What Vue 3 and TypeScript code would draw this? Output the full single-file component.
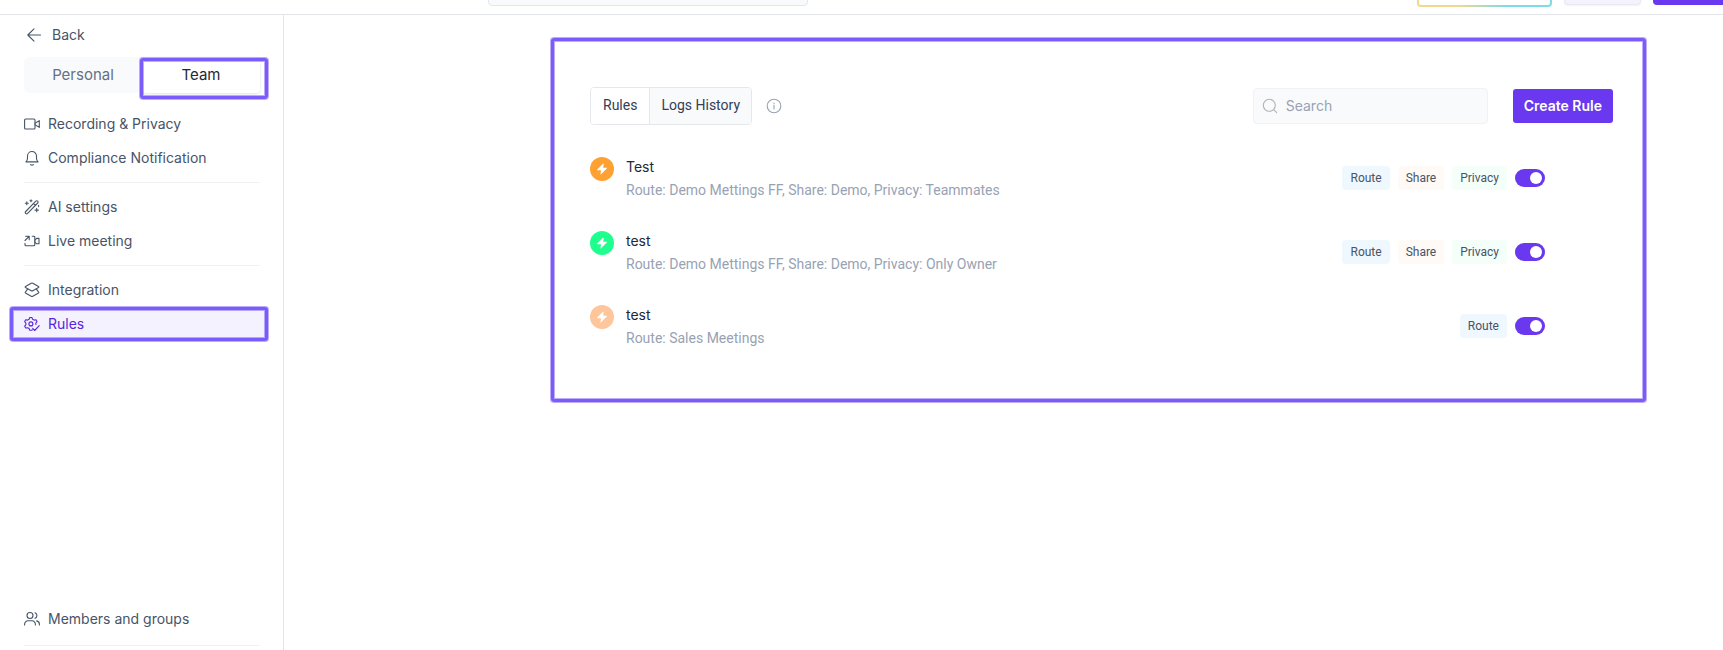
<script setup lang="ts">
import { ref } from 'vue'

interface NavItem {
  label: string
  icon: string
  active?: boolean
}

interface Rule {
  name: string
  detail: string
  tone: string
  tags: string[]
  enabled: boolean
}

const groups: NavItem[][] = [
  [
    { label: 'Recording & Privacy', icon: 'video' },
    { label: 'Compliance Notification', icon: 'bell' },
  ],
  [
    { label: 'AI settings', icon: 'wand' },
    { label: 'Live meeting', icon: 'live' },
  ],
  [
    { label: 'Integration', icon: 'layers' },
    { label: 'Rules', icon: 'gear', active: true },
  ],
]

const rules = ref<Rule[]>([
  {
    name: 'Test',
    detail: 'Route: Demo Mettings FF, Share: Demo, Privacy: Teammates',
    tone: 'orange',
    tags: ['Route', 'Share', 'Privacy'],
    enabled: true,
  },
  {
    name: 'test',
    detail: 'Route: Demo Mettings FF, Share: Demo, Privacy: Only Owner',
    tone: 'green',
    tags: ['Route', 'Share', 'Privacy'],
    enabled: true,
  },
  {
    name: 'test',
    detail: 'Route: Sales Meetings',
    tone: 'peach',
    tags: ['Route'],
    enabled: true,
  },
])

const query = ref('')
</script>

<template>
  <div class="page">
    <header class="topbar">
      <div class="top-search"></div>
      <div class="top-actions">
        <div class="top-upgrade"></div>
        <div class="top-secondary"></div>
        <div class="top-primary"></div>
      </div>
    </header>

    <div class="body">
      <aside class="sidebar">
        <a href="#" class="back">
          <svg width="16" height="16" viewBox="0 0 16 16" class="line"><path d="M14.5 8H1.8M8 1.8 1.8 8 8 14.2" /></svg>
          <span>Back</span>
        </a>

        <div class="scope">
          <button type="button" class="scope-tab">Personal</button>
          <button type="button" class="scope-tab selected">Team</button>
          <div class="scope-marker"></div>
        </div>

        <nav class="nav">
          <ul v-for="(group, g) in groups" :key="g" class="group">
            <li v-for="item in group" :key="item.label">
              <a href="#" class="nav-link" :class="{ active: item.active }">
                <svg width="16" height="16" viewBox="0 0 16 16" class="line">
                  <template v-if="item.icon === 'video'">
                    <rect x="0.6" y="3" width="10.4" height="10" rx="1" />
                    <path d="M11 7.2 15.3 4.6V11.4L11 8.8" />
                  </template>
                  <template v-else-if="item.icon === 'bell'">
                    <path d="M2 11.9h12c-1-1-1.5-2-1.5-3.6V6A4.5 4.5 0 0 0 3.5 6v2.3C3.5 9.9 3 10.9 2 11.9zM6.6 14.6c.8.6 2 .6 2.8 0" />
                  </template>
                  <template v-else-if="item.icon === 'wand'">
                    <path d="M1.7 12.5 11.8 2.2a1.25 1.25 0 0 1 1.9 1.8L3.6 14.4a1.25 1.25 0 0 1-1.9-1.9zM9.5 4.6l1.9 1.8" />
                    <path d="M2.8 2.8v3M1.3 4.3h3M12.7 9.4v3.4M11 11.1h3.4M7 .8v2M6 1.8h2M14.6 6.2v1.4" />
                  </template>
                  <template v-else-if="item.icon === 'live'">
                    <path d="M1 7.5 5 3.3M1.6 3.2h3.6v3.6M8.2 3.2h1.6a1 1 0 0 1 1 1v7.6a1 1 0 0 1-1 1H2a1 1 0 0 1-1-1V10.4" />
                    <path d="M10.8 7.3 12.6 5.4h2.4v5.4h-2.4l-1.8-1.9" />
                  </template>
                  <template v-else-if="item.icon === 'layers'">
                    <path d="M7.2 1.3a1.6 1.6 0 0 1 1.6 0l5.7 3.2c.5.3.5.7 0 1L8.8 8.7a1.6 1.6 0 0 1-1.6 0L1.5 5.5c-.5-.3-.5-.7 0-1z" />
                    <path d="M3.6 7.1 1.5 9.9c-.4.4-.4.7 0 1l5.7 3.3a1.6 1.6 0 0 0 1.6 0l5.7-3.3c.4-.3.4-.6 0-1l-2.1-2.8" />
                  </template>
                  <template v-else>
                    <path d="M8.3 13.8 7.9 14.3H5.8L5.1 12.5 3.6 11.7 1.7 12 .7 10.2 1.9 8.7V7.1L.7 5.6 1.7 3.8 3.6 4.1 5.1 3.2 5.8 1.5H7.9L8.6 3.2 10.1 4.1 12 3.8 13 5.6 11.8 7.1 11.9 8.5" />
                    <circle cx="6.9" cy="7.9" r="2" />
                    <path d="M8.7 12.4 10.7 14.5 15.2 9.7" />
                  </template>
                </svg>
                <span>{{ item.label }}</span>
              </a>
            </li>
          </ul>
        </nav>

        <ul class="group bottom">
          <li>
            <a href="#" class="nav-link">
              <svg width="16" height="16" viewBox="0 0 16 16" class="line">
                <circle cx="6" cy="4.5" r="3" />
                <path d="M.6 14v-.8a3.4 3.4 0 0 1 3.4-3.4h4a3.4 3.4 0 0 1 3.4 3.4v.8M11 1.7a3 3 0 0 1 0 5.6M12.6 9.9a3.4 3.4 0 0 1 2.8 3.3v.8" />
              </svg>
              <span>Members and groups</span>
            </a>
          </li>
        </ul>
      </aside>

      <main class="main">
        <section class="panel">
          <div class="toolbar">
            <div class="segments">
              <button type="button" class="segment selected">Rules</button>
              <button type="button" class="segment">Logs History</button>
            </div>
            <button type="button" class="info" aria-label="About rules">
              <svg width="16" height="16" viewBox="0 0 16 16" class="line">
                <circle cx="8" cy="8" r="6.8" />
                <path d="M8 7.3V11M8 5v.8" />
              </svg>
            </button>
            <label class="search">
              <svg width="16" height="16" viewBox="0 0 16 16" class="line">
                <circle cx="7.3" cy="7.3" r="6" />
                <path d="m11.7 11.7 3 3" />
              </svg>
              <input v-model="query" type="search" placeholder="Search" aria-label="Search" />
            </label>
            <button type="button" class="create">Create Rule</button>
          </div>

          <ul class="rules">
            <li v-for="(rule, i) in rules" :key="i" class="rule">
              <span class="badge" :class="rule.tone">
                <svg width="12" height="12" viewBox="0 0 12 12"><path d="M7 .8 1.2 6.5c-.3.4-.1.7.3.7H5L4.5 11.2c0 .4.3.4.6.1L10.8 5.5c.3-.4.1-.7-.3-.7H7.2L7.7 1.1C7.7.6 7.3.5 7 .8z" /></svg>
              </span>
              <div class="text">
                <h3>{{ rule.name }}</h3>
                <p>{{ rule.detail }}</p>
              </div>
              <div class="side">
                <span v-for="tag in rule.tags" :key="tag" class="tag" :class="tag.toLowerCase()">{{ tag }}</span>
                <input v-model="rule.enabled" type="checkbox" role="switch" class="switch" :aria-label="`Enable ${rule.name}`" />
              </div>
            </li>
          </ul>
        </section>
      </main>
    </div>
  </div>
</template>

<style>
body {
  margin: 0;
  background: #fff;
}
</style>

<style scoped>
.page {
  display: flex;
  flex-direction: column;
  height: 100vh;
  overflow: hidden;
  color: #475467;
  font-family: Inter, "Liberation Sans", sans-serif;
  font-size: 14px;
  line-height: 20px;
}

.page * {
  box-sizing: border-box;
}

button,
input {
  font: inherit;
  color: inherit;
  margin: 0;
}

button {
  border: 0;
  padding: 0;
  background: none;
  cursor: pointer;
}

a {
  color: inherit;
  text-decoration: none;
}

ul {
  list-style: none;
  margin: 0;
  padding: 0;
}

.line {
  flex: none;
  fill: none;
  stroke: currentColor;
  stroke-width: 1.1;
  stroke-linecap: round;
  stroke-linejoin: round;
}

.topbar {
  flex: none;
  display: flex;
  justify-content: space-between;
  align-items: flex-end;
  height: 15px;
  padding: 0 0 8px 488px;
  border-bottom: 1px solid #e4e5e8;
}

.top-search {
  width: 320px;
  height: 36px;
  border: 1px solid #e4e7ec;
  border-radius: 4px;
  background: #f9fafc;
}

.top-actions {
  display: flex;
  align-items: flex-end;
  gap: 12px;
}

.top-upgrade {
  width: 135px;
  height: 36px;
  margin-bottom: -1px;
  border: 2px solid transparent;
  border-radius: 4px;
  background:
    linear-gradient(#fff, #fff) padding-box,
    linear-gradient(90deg, #f0d98c 30%, #7edbe8 65%) border-box;
}

.top-secondary {
  width: 77px;
  height: 36px;
  margin-bottom: 1px;
  border: 1px solid #e9e8f2;
  border-radius: 4px;
  background: #f4f2fd;
  box-shadow: 0 1px 2px #1018280d;
}

.top-primary {
  width: 70px;
  height: 36px;
  margin-bottom: 1px;
  border-radius: 4px 0 0 4px;
  background: #6938ef;
}

.body {
  flex: 1;
  min-height: 0;
  display: flex;
}

.sidebar {
  flex: none;
  display: flex;
  flex-direction: column;
  width: 284px;
  padding: 10px 24px 4px;
  padding-right: 23px;
  border-right: 1px solid #e4e5e8;
}

.back {
  display: flex;
  align-items: center;
  gap: 10px;
  height: 20px;
  padding-left: 2px;
}

.scope {
  position: relative;
  display: flex;
  height: 36px;
  margin-top: 12px;
  border-radius: 6px;
  background: #f9fafc;
}

.scope-tab {
  flex: 1;
  color: #667085;
  font-size: 15px;
  border-radius: 4px;
}

.scope-tab.selected {
  background: #fff;
  color: #1d2939;
  box-shadow: 0 1px 3px #1018281f;
}

.scope-marker {
  position: absolute;
  inset: 1px -8px -6px 116px;
  border: 3px solid #7b5cfa;
  border-radius: 3px;
  box-shadow: 0 0 0 1px #7b5cfa80, inset 0 0 0 1px #7b5cfa80;
  pointer-events: none;
}

.nav {
  margin-top: 14px;
}

.group {
  display: flex;
  flex-direction: column;
}

.nav .group + .group {
  margin-top: 7px;
  padding-top: 7px;
  border-top: 1px solid #f0f1f4;
}

.nav-link {
  display: flex;
  align-items: center;
  gap: 8px;
  height: 34px;
}

.nav-link.active {
  margin: 0 -8px 0 -14px;
  padding-left: 11px;
  border: 3px solid #7b5cfa;
  border-radius: 3px;
  background: #f4f2ff;
  box-shadow: 0 0 0 1px #7b5cfa80, inset 0 0 0 1px #7b5cfa80;
  color: #5925dc;
}

.bottom {
  margin-top: auto;
  padding-bottom: 9px;
  border-bottom: 1px solid #f0f1f4;
}

.main {
  flex: 1;
  min-width: 0;
  padding: 23px 77px 0 267px;
}

.panel {
  padding: 46px 30px 48px 36px;
  border: 3px solid #7b5cfa;
  border-radius: 3px;
  box-shadow: 0 0 0 1px #7b5cfa80, inset 0 0 0 1px #7b5cfa80;
  font-family: Roboto, "Liberation Sans", sans-serif;
}

.toolbar {
  display: flex;
  align-items: center;
}

.segments {
  display: flex;
  height: 38px;
  border: 1px solid #e4e7ec;
  border-radius: 4px;
  overflow: hidden;
  color: #344054;
}

.segment {
  padding: 0 11px 2px;
  background: #f9fafc;
}

.segment.selected {
  padding: 0 12px 2px;
  background: #fff;
}

.segment + .segment {
  border-left: 1px solid #e4e7ec;
}

.info {
  display: flex;
  margin-left: 14px;
  color: #98a2b3;
}

.search {
  display: flex;
  align-items: center;
  gap: 8px;
  width: 235px;
  height: 36px;
  margin-left: auto;
  padding: 0 8px;
  border: 1px solid #f0f2f5;
  border-radius: 4px;
  background: #f9fafc;
  color: #b0b3b8;
  font-family: Inter, "Liberation Sans", sans-serif;
}

.search input {
  flex: 1;
  min-width: 0;
  padding: 0;
  border: 0;
  outline: 0;
  background: none;
  color: #344054;
}

.search input::placeholder {
  color: #98a2b3;
}

.create {
  height: 34px;
  margin-left: 25px;
  padding: 0 11px;
  border-radius: 3px;
  background: #6938ef;
  color: #fff;
  font-family: Inter, "Liberation Sans", sans-serif;
  font-weight: 600;
}

.rules {
  display: flex;
  flex-direction: column;
  gap: 28px;
  padding: 32px 68px 0 0;
}

.rule {
  display: flex;
  align-items: flex-start;
  height: 46px;
}

.badge {
  display: grid;
  place-items: center;
  width: 24px;
  height: 24px;
  border-radius: 50%;
  fill: #fff;
}

.badge.orange {
  background: #ffa033;
}

.badge.green {
  background: #1eff8e;
}

.badge.peach {
  background: #ffc59b;
}

.text {
  flex: 1;
  min-width: 0;
  padding-left: 12px;
}

.text h3 {
  margin: 0;
  color: #1d2939;
  font-family: Inter, "Liberation Sans", sans-serif;
  font-size: 14px;
  font-weight: 400;
  line-height: 20px;
}

.text p {
  margin: 3px 0 0;
  color: #98a2b3;
}

.side {
  display: flex;
  align-items: center;
  gap: 8px;
  height: 42px;
}

.tag {
  height: 24px;
  padding: 0 8px;
  border-radius: 4px;
  color: #475467;
  font-size: 12px;
  line-height: 24px;
}

.tag.route {
  background: #eff8ff;
}

.tag.share {
  background: #fffaf5;
}

.tag.privacy {
  background: #f5fffa;
}

.switch {
  appearance: none;
  width: 30px;
  height: 18px;
  padding: 3px;
  border-radius: 9px;
  background: #d0d5dd;
  cursor: pointer;
}

.switch::before {
  content: "";
  display: block;
  width: 12px;
  height: 12px;
  border-radius: 50%;
  background: #fff;
}

.switch:checked {
  background: #6938ef;
}

.switch:checked::before {
  margin-left: auto;
}
</style>
